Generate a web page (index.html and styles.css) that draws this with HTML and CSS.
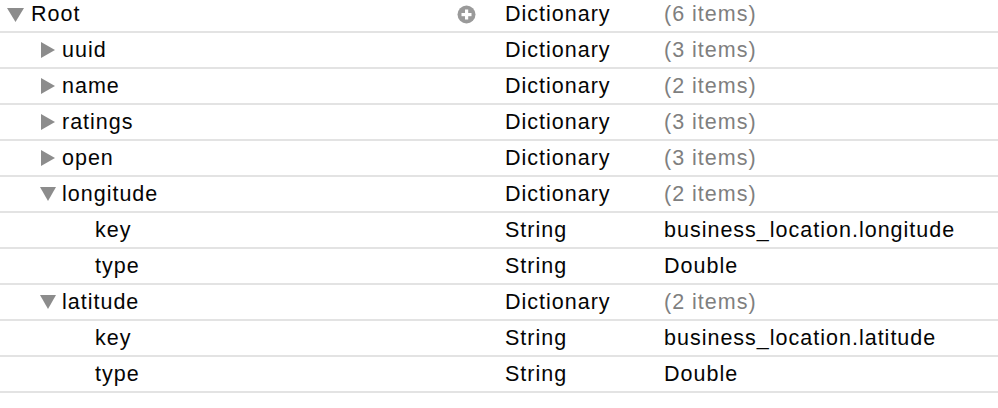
FILE: index.html
```html
<!DOCTYPE html>
<html>
<head>
<meta charset="utf-8">
<link rel="stylesheet" href="styles.css">
</head>
<body>
<div class="tree">
  <div class="row first">
    <div class="key lvl0">
      <svg class="tog" width="17" height="15" viewBox="0 0 17 15"><polygon points="0,1 17,1 8.5,15" fill="#8c8c8c"/></svg>
      <span>Root</span>
      <svg class="add" width="19" height="19" viewBox="0 0 19 19"><circle cx="9.5" cy="9.5" r="9" fill="#9a9a9a"/><rect x="8" y="4.5" width="3.2" height="10" fill="#fff"/><rect x="4.5" y="8" width="10" height="3.2" fill="#fff"/></svg>
    </div>
    <div class="type">Dictionary</div>
    <div class="val muted">(6 items)</div>
  </div>
  <div class="row">
    <div class="key lvl1">
      <svg class="tog" width="16" height="16" viewBox="0 0 16 16"><polygon points="1,0 15,8 1,16" fill="#8c8c8c"/></svg>
      <span>uuid</span>
    </div>
    <div class="type">Dictionary</div>
    <div class="val muted">(3 items)</div>
  </div>
  <div class="row">
    <div class="key lvl1">
      <svg class="tog" width="16" height="16" viewBox="0 0 16 16"><polygon points="1,0 15,8 1,16" fill="#8c8c8c"/></svg>
      <span>name</span>
    </div>
    <div class="type">Dictionary</div>
    <div class="val muted">(2 items)</div>
  </div>
  <div class="row">
    <div class="key lvl1">
      <svg class="tog" width="16" height="16" viewBox="0 0 16 16"><polygon points="1,0 15,8 1,16" fill="#8c8c8c"/></svg>
      <span>ratings</span>
    </div>
    <div class="type">Dictionary</div>
    <div class="val muted">(3 items)</div>
  </div>
  <div class="row">
    <div class="key lvl1">
      <svg class="tog" width="16" height="16" viewBox="0 0 16 16"><polygon points="1,0 15,8 1,16" fill="#8c8c8c"/></svg>
      <span>open</span>
    </div>
    <div class="type">Dictionary</div>
    <div class="val muted">(3 items)</div>
  </div>
  <div class="row">
    <div class="key lvl1">
      <svg class="tog" width="16" height="16" viewBox="0 0 16 16"><polygon points="0,1 16,1 8,15" fill="#8c8c8c"/></svg>
      <span>longitude</span>
    </div>
    <div class="type">Dictionary</div>
    <div class="val muted">(2 items)</div>
  </div>
  <div class="row">
    <div class="key lvl2"><span>key</span></div>
    <div class="type">String</div>
    <div class="val">business_location.longitude</div>
  </div>
  <div class="row">
    <div class="key lvl2"><span>type</span></div>
    <div class="type">String</div>
    <div class="val">Double</div>
  </div>
  <div class="row">
    <div class="key lvl1">
      <svg class="tog" width="16" height="16" viewBox="0 0 16 16"><polygon points="0,1 16,1 8,15" fill="#8c8c8c"/></svg>
      <span>latitude</span>
    </div>
    <div class="type">Dictionary</div>
    <div class="val muted">(2 items)</div>
  </div>
  <div class="row">
    <div class="key lvl2"><span>key</span></div>
    <div class="type">String</div>
    <div class="val">business_location.latitude</div>
  </div>
  <div class="row">
    <div class="key lvl2"><span>type</span></div>
    <div class="type">String</div>
    <div class="val">Double</div>
  </div>
</div>
</body>
</html>
```

FILE: styles.css
```css
html, body {
  margin: 0;
  padding: 0;
  background: #ffffff;
}

body {
  font-family: "Liberation Sans", Arial, sans-serif;
  font-size: 21.5px;
  letter-spacing: 1px;
  color: #050505;
  overflow: hidden;
}

.tree {
  display: flex;
  flex-direction: column;
}

.row {
  display: grid;
  grid-template-columns: 505px 159px 1fr;
  height: 34px;
  align-items: center;
  border-bottom: 2px solid #e3e3e3;
}

.row.first {
  margin-top: -3px;
}

.key {
  display: flex;
  align-items: center;
  height: 100%;
}

.lvl0 { padding-left: 7px; }
.lvl1 { padding-left: 40px; }
.lvl2 { padding-left: 95px; }

.tog {
  display: block;
  flex: none;
}

.lvl0 .tog { margin-right: 7px; }
.lvl1 .tog { margin-right: 6px; }

.add {
  display: block;
  flex: none;
  margin-left: auto;
  margin-right: 29px;
}

.type, .val {
  white-space: nowrap;
}

.muted {
  color: #7f7f7f;
}
```
